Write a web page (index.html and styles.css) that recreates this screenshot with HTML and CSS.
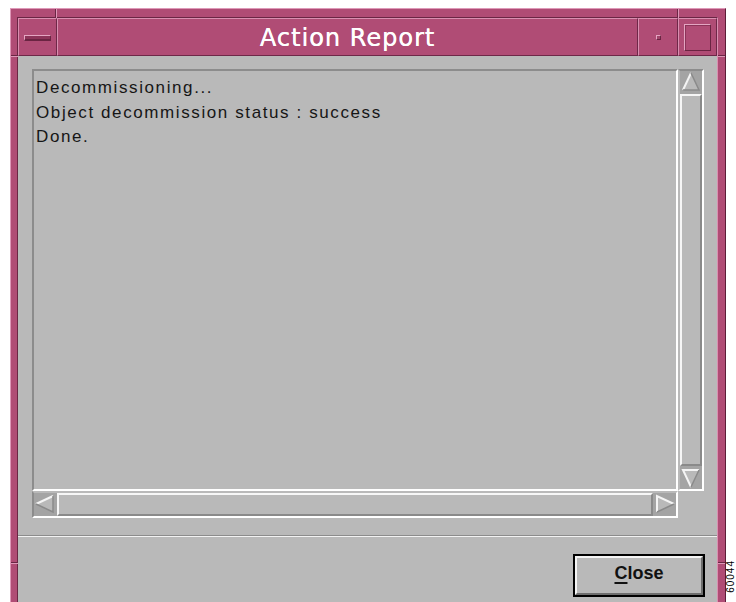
FILE: index.html
```html
<!DOCTYPE html>
<html lang="en">
<head>
<meta charset="utf-8">
<title>Action Report</title>
<link rel="stylesheet" href="styles.css">
</head>
<body>
<div class="figure">
  <div class="window">
    <!-- resize-handle notches in the frame -->
    <span class="notch notch-top-left"></span>
    <span class="notch notch-left-top"></span>
    <span class="notch notch-top-right"></span>
    <span class="notch notch-right-top"></span>
    <span class="notch notch-left-bottom"></span>
    <span class="notch notch-right-bottom"></span>

    <div class="frame-inner">
      <div class="titlebar">
        <div class="tb-btn tb-menu"><span class="menu-bar"></span></div>
        <div class="tb-title">Action Report</div>
        <div class="tb-btn tb-iconify"><span class="iconify-dot"></span></div>
        <div class="tb-btn tb-maximize"><span class="max-box"></span></div>
      </div>

      <div class="client">
        <div class="scrolled">
          <div class="scroll-row">
            <div class="text-area">
              <div class="line">Decommissioning...</div>
              <div class="line">Object decommission status : success</div>
              <div class="line">Done.</div>
            </div>
            <div class="vscroll">
              <svg class="arrow" width="22" height="22" viewBox="0 0 22 22">
                <polygon points="11,2 3,19 19,19" fill="#b9b9b9"/>
                <polyline points="3,19 11,2" fill="none" stroke="#f4f4f4" stroke-width="2"/>
                <polyline points="11,2 19,19 3,19" fill="none" stroke="#8a8a8a" stroke-width="1.5"/>
              </svg>
              <div class="vthumb"></div>
              <svg class="arrow" width="22" height="22" viewBox="0 0 22 22">
                <polygon points="3,3 19,3 11,20" fill="#b9b9b9"/>
                <polyline points="11,20 3,3 19,3" fill="none" stroke="#f4f4f4" stroke-width="2"/>
                <polyline points="19,3 11,20" fill="none" stroke="#8a8a8a" stroke-width="1.5"/>
              </svg>
            </div>
          </div>
          <div class="hscroll">
            <svg class="arrow" width="22" height="22" viewBox="0 0 22 22">
              <polygon points="2,11 19,3 19,19" fill="#b9b9b9"/>
              <polyline points="2,11 19,3" fill="none" stroke="#f4f4f4" stroke-width="2"/>
              <polyline points="19,3 19,19 2,11" fill="none" stroke="#8a8a8a" stroke-width="1.5"/>
            </svg>
            <div class="hthumb"></div>
            <svg class="arrow" width="22" height="22" viewBox="0 0 22 22">
              <polygon points="3,3 20,11 3,19" fill="#b9b9b9"/>
              <polyline points="3,19 3,3 20,11" fill="none" stroke="#f4f4f4" stroke-width="2"/>
              <polyline points="20,11 3,19" fill="none" stroke="#8a8a8a" stroke-width="1.5"/>
            </svg>
          </div>
        </div>

        <div class="separator"></div>

        <div class="actions">
          <div class="default-ring">
            <button class="btn" type="button"><span class="mnemonic">C</span>lose</button>
          </div>
        </div>
      </div>
    </div>
  </div>
  <div class="fig-id">60044</div>
</div>
</body>
</html>
```

FILE: styles.css
```css
html, body {
  margin: 0;
  padding: 0;
  background: #ffffff;
  height: 602px;
  overflow: hidden;
}

.figure {
  position: relative;
  padding: 8px 0 0 10px;
  font-family: "Liberation Sans", Arial, sans-serif;
}

/* ---------- window frame ---------- */
.window {
  position: relative;
  width: 716px;
  box-sizing: border-box;
  background: #b04c75;
  border-top: 1px solid #de98b8;
  border-left: 1px solid #de98b8;
  border-right: 1px solid #5c1d38;
  padding: 8px 7px 0 6px;
}

.frame-inner {
  border-top: 1px solid #6a2644;
  border-left: 1px solid #6a2644;
  border-right: 1px solid #d98fb0;
  background: #b9b9b9;
}

.notch {
  position: absolute;
  display: block;
}
.notch-top-left {
  left: 44px; top: 0; width: 1px; height: 9px;
  background: #6a2644; box-shadow: 1px 0 0 #de98b8;
}
.notch-top-right {
  left: 666px; top: 0; width: 1px; height: 9px;
  background: #6a2644; box-shadow: 1px 0 0 #de98b8;
}
.notch-left-top {
  left: 0; top: 46px; width: 7px; height: 1px;
  background: #6a2644; box-shadow: 0 1px 0 #de98b8;
}
.notch-right-top {
  right: 0; top: 46px; width: 7px; height: 1px;
  background: #6a2644; box-shadow: 0 1px 0 #de98b8;
}
.notch-left-bottom {
  left: 0; top: 553px; width: 7px; height: 1px;
  background: #6a2644; box-shadow: 0 1px 0 #de98b8;
}
.notch-right-bottom {
  right: 0; top: 553px; width: 7px; height: 1px;
  background: #6a2644; box-shadow: 0 1px 0 #de98b8;
}

/* ---------- title bar ---------- */
.titlebar {
  display: flex;
  height: 38px;
  background: #b04c75;
}

.tb-btn,
.tb-title {
  box-sizing: border-box;
  border: 1px solid;
  border-color: #d98fb0 #6e2848 #6e2848 #d98fb0;
  display: flex;
  align-items: center;
  justify-content: center;
}

.tb-menu { width: 39px; }
.tb-iconify { width: 40px; }
.tb-maximize { width: 39px; }

.tb-title {
  flex: 1;
  color: #ffffff;
  font-family: "DejaVu Sans", "Liberation Sans", sans-serif;
  font-size: 24px;
  letter-spacing: 1px;
  padding-top: 1px;
  text-shadow: 0.3px 0 0 #ffffff;
}

.menu-bar {
  display: block;
  width: 27px;
  height: 6px;
  box-sizing: border-box;
  border-top: 1px solid #e4a6c2;
  border-left: 1px solid #e4a6c2;
  border-right: 1px solid #6a2442;
  border-bottom: 2px solid #6a2442;
  background: #8c3459;
  margin-top: 1px;
}

.iconify-dot {
  display: block;
  width: 5px;
  height: 5px;
  box-sizing: border-box;
  border: 1px solid;
  border-color: #e4a6c2 #6a2442 #6a2442 #e4a6c2;
  background: #a0446a;
}

.max-box {
  display: block;
  width: 27px;
  height: 27px;
  box-sizing: border-box;
  border: 1px solid;
  border-color: #e4a6c2 #6a2442 #6a2442 #e4a6c2;
  box-shadow: inset 1px 1px 0 #8c3459;
}

/* ---------- client area ---------- */
.client {
  padding-top: 13px;
  height: 560px;
  box-sizing: border-box;
}

.scrolled {
  margin: 0 13px 0 14px;
}

.scroll-row {
  display: flex;
  height: 422px;
}

.text-area {
  width: 646px;
  box-sizing: border-box;
  border: 2px solid;
  border-color: #8c8c8c #ffffff #ffffff #8c8c8c;
  padding: 5px 2px;
  font-size: 17px;
  letter-spacing: 1.6px;
  line-height: 24.5px;
  color: #161616;
}

.vscroll {
  width: 26px;
  box-sizing: border-box;
  border: 2px solid;
  border-color: #8c8c8c #ffffff #ffffff #b9b9b9;
  background: #a4a4a4;
  display: flex;
  flex-direction: column;
  gap: 1px;
}

.arrow {
  display: block;
  flex: none;
}

.vthumb {
  flex: 1;
  box-sizing: border-box;
  border: 2px solid;
  border-color: #f6f6f6 #8a8a8a #8a8a8a #f6f6f6;
  background: #b9b9b9;
}

.hscroll {
  width: 646px;
  height: 27px;
  box-sizing: border-box;
  border: 2px solid;
  border-color: #b9b9b9 #ffffff #ffffff #8c8c8c;
  background: #a4a4a4;
  display: flex;
  gap: 1px;
}

.hthumb {
  flex: 1;
  box-sizing: border-box;
  border: 2px solid;
  border-color: #f6f6f6 #8a8a8a #8a8a8a #f6f6f6;
  background: #b9b9b9;
}

.separator {
  margin-top: 17px;
  border-top: 1px solid #8c8c8c;
  border-bottom: 1px solid #f2f2f2;
}

.actions {
  display: flex;
  justify-content: flex-end;
  padding: 17px 12px 0 0;
}

.default-ring {
  width: 132px;
  height: 43px;
  box-sizing: border-box;
  border: 2px solid #000000;
  display: flex;
}

.btn {
  flex: 1;
  margin: 0;
  box-sizing: border-box;
  border: 2px solid;
  border-color: #f4f4f4 #6e6e6e #6e6e6e #f4f4f4;
  background: #b9b9b9;
  font-family: "Liberation Sans", Arial, sans-serif;
  font-weight: bold;
  font-size: 18px;
  color: #111111;
  padding: 0 0 4px 0;
}

.mnemonic {
  text-decoration: underline;
  text-decoration-thickness: 2px;
  text-underline-offset: 3px;
}

.fig-id {
  position: absolute;
  left: 726px;
  top: 560px;
  writing-mode: vertical-rl;
  transform: rotate(180deg);
  font-size: 10px;
  line-height: 10px;
  letter-spacing: 1px;
  color: #000000;
}
```
